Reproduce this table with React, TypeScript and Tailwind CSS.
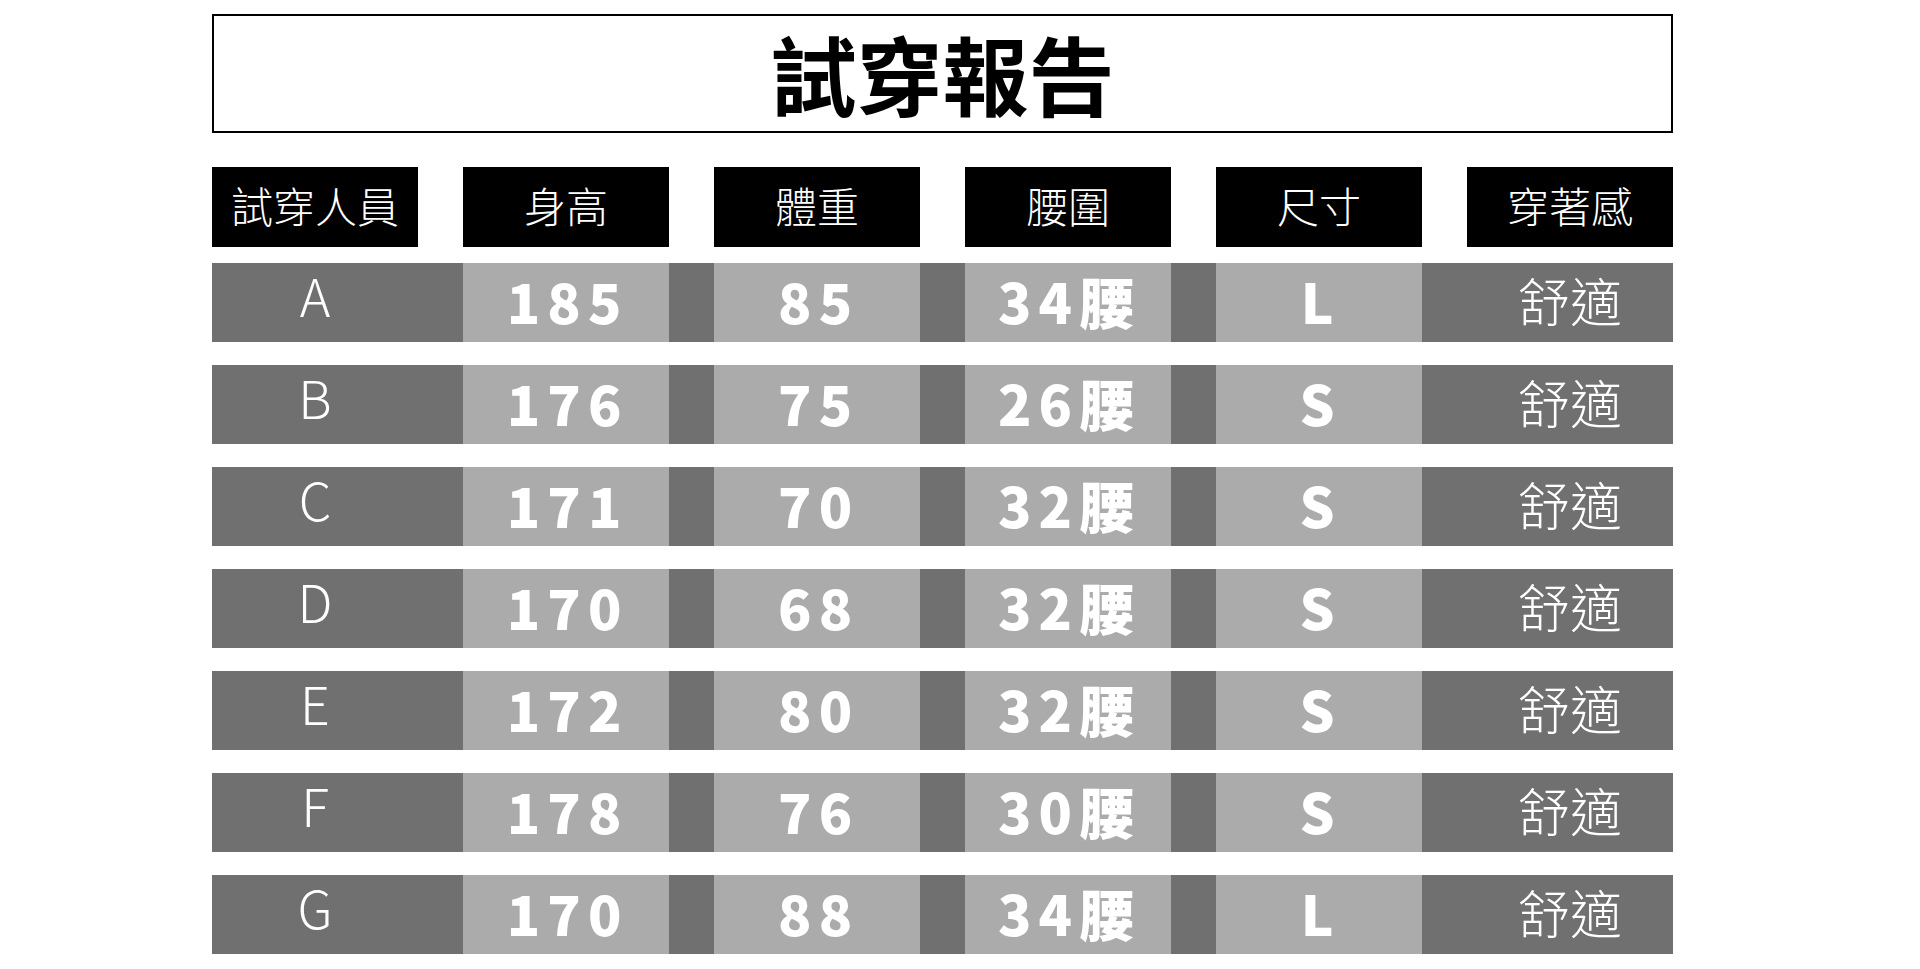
import React from "react";

const headers = ["試穿人員", "身高", "體重", "腰圍", "尺寸", "穿著感"];
const rows = [
  ["A", "185", "85", "34腰", "L", "舒適"],
  ["B", "176", "75", "26腰", "S", "舒適"],
  ["C", "171", "70", "32腰", "S", "舒適"],
  ["D", "170", "68", "32腰", "S", "舒適"],
  ["E", "172", "80", "32腰", "S", "舒適"],
  ["F", "178", "76", "30腰", "S", "舒適"],
  ["G", "170", "88", "34腰", "L", "舒適"],
];

const font = { fontFamily: '"Noto Sans CJK TC", "Noto Sans", sans-serif' };

export default function App() {
  return (
    <div className="min-h-[969px] w-full bg-white" style={font}>
      <div className="ml-[212px] flex w-[1461px] flex-col pt-[14px]">
        <div className="flex h-[119px] items-center justify-center border-2 border-black pb-[2px]">
          <span className="text-[86px] font-bold leading-none text-black">試穿報告</span>
        </div>
        <div className="mt-[34px] grid grid-cols-[repeat(6,206px)] gap-x-[45px]">
          {headers.map((h) => (
            <div key={h} className="flex h-[80px] items-center justify-center bg-black pb-[5px]">
              <span className="text-[42px] font-light leading-none text-white">{h}</span>
            </div>
          ))}
        </div>
        <div className="mt-[16px] flex flex-col gap-[23px]">
          {rows.map((r) => (
            <div key={r[0]} className="grid h-[79px] grid-cols-[repeat(6,206px)] gap-x-[45px] bg-[#707070]">
              <div className="flex items-center justify-center pb-[16px]">
                <span className="text-[52px] font-light leading-none text-white">{r[0]}</span>
              </div>
              {r.slice(1, 5).map((v, i) => (
                <div key={i} className="flex items-center justify-center bg-[#ababab] pb-[5px]">
                  <span className="pl-[0.06em] text-[55px] font-black leading-none tracking-[0.13em] text-white">{v}</span>
                </div>
              ))}
              <div className="flex items-center justify-center pb-[5px]">
                <span className="text-[52px] font-light leading-none text-white">{r[5]}</span>
              </div>
            </div>
          ))}
        </div>
      </div>
    </div>
  );
}
